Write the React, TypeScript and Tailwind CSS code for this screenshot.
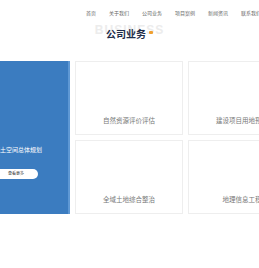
const navItems = ['首页', '关于我们', '公司业务', '项目案例', '新闻资讯', '联系我们'];

const services = ['自然资源评价评估', '建设项目用地预审', '全域土地综合整治', '地理信息工程'];

const font = { fontFamily: '"Liberation Sans", "Noto Sans CJK SC", sans-serif' };

export default function App() {
    return (
        <div className="relative h-[268px] w-[259px] overflow-hidden bg-white" style={font}>
            <nav className="flex gap-[13px] whitespace-nowrap pl-[86px] pt-[11px] text-[5px] leading-[5px] text-[#666]">
                {navItems.map((item) => (
                    <span key={item}>{item}</span>
                ))}
            </nav>

            {/* section title with ghost english word behind it */}
            <div className="relative mt-[9px] flex h-[20px] justify-center">
                <span className="absolute top-[-1px] text-[12px] font-bold uppercase leading-[12px] tracking-[1px] text-[#ececec]">
                    Business
                </span>
                <div className="relative mt-[4px] flex items-start gap-[3px]">
                    <h2 className="text-[10px] font-bold leading-[11px] text-[#1e2d4a]">公司业务</h2>
                    <span className="mt-[2px] h-[3px] w-[4px] rounded-[1px] bg-[#f0a030]" />
                </div>
            </div>

            <div className="ml-[-38px] mt-[16px] flex gap-[5px]">
                <div className="flex h-[153px] w-[108px] shrink-0 flex-col border-r-2 border-[#5e98d4] bg-[#3b7cc0] pl-[32px] pt-[86px]">
                    <p className="whitespace-nowrap text-[6px] leading-[6px] text-white">国土空间总体规划</p>
                    <button className="mt-[16px] flex h-[10px] w-[44px] items-center justify-center rounded-full bg-white text-[4px] leading-[4px] text-[#333]">
                        查看更多
                    </button>
                </div>
                <div className="grid shrink-0 grid-cols-[108px_108px] grid-rows-[74px_74px] gap-[5px]">
                    {services.map((name) => (
                        <div
                            key={name}
                            className="flex items-end justify-center border border-[#eeeeee] bg-white pb-[9px]"
                        >
                            <span className="whitespace-nowrap text-[6.5px] leading-[8px] text-[#777]">{name}</span>
                        </div>
                    ))}
                </div>
            </div>
        </div>
    );
}
